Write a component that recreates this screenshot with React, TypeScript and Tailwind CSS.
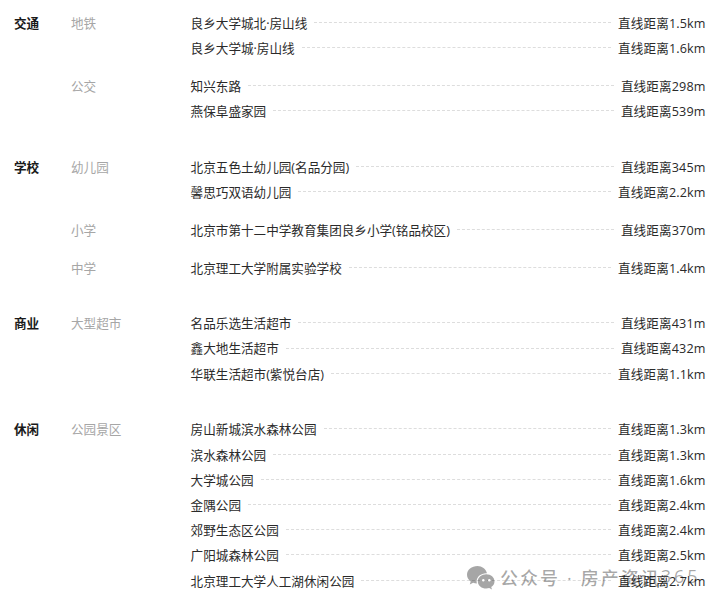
const groups = [
  {
    title: "交通",
    subs: [
      {
        name: "地铁",
        rows: [
          ["良乡大学城北·房山线", "直线距离1.5km"],
          ["良乡大学城·房山线", "直线距离1.6km"],
        ],
      },
      {
        name: "公交",
        rows: [
          ["知兴东路", "直线距离298m"],
          ["燕保阜盛家园", "直线距离539m"],
        ],
      },
    ],
  },
  {
    title: "学校",
    subs: [
      {
        name: "幼儿园",
        rows: [
          ["北京五色土幼儿园(名品分园)", "直线距离345m"],
          ["馨思巧双语幼儿园", "直线距离2.2km"],
        ],
      },
      { name: "小学", rows: [["北京市第十二中学教育集团良乡小学(铭品校区)", "直线距离370m"]] },
      { name: "中学", rows: [["北京理工大学附属实验学校", "直线距离1.4km"]] },
    ],
  },
  {
    title: "商业",
    subs: [
      {
        name: "大型超市",
        rows: [
          ["名品乐选生活超市", "直线距离431m"],
          ["鑫大地生活超市", "直线距离432m"],
          ["华联生活超市(紫悦台店)", "直线距离1.1km"],
        ],
      },
    ],
  },
  {
    title: "休闲",
    subs: [
      {
        name: "公园景区",
        rows: [
          ["房山新城滨水森林公园", "直线距离1.3km"],
          ["滨水森林公园", "直线距离1.3km"],
          ["大学城公园", "直线距离1.6km"],
          ["金隅公园", "直线距离2.4km"],
          ["郊野生态区公园", "直线距离2.4km"],
          ["广阳城森林公园", "直线距离2.5km"],
          ["北京理工大学人工湖休闲公园", "直线距离2.7km"],
        ],
      },
    ],
  },
];

export default function App() {
  return (
    <div className="relative h-[608px] w-[724px] overflow-hidden bg-white font-['Open_Sans','Noto_Sans_CJK_SC',sans-serif] text-[12.6px] leading-[25.2px] text-[#2a2a2a]">
      <div className="flex flex-col gap-[30.5px] pl-[14px] pr-[18.5px] pt-[10.85px]">
        {groups.map((group) => (
          <div key={group.title} className="flex">
            <div className="w-[57px] shrink-0 font-bold text-[#1a1a1a]">{group.title}</div>
            <div className="flex min-w-0 flex-1 flex-col gap-[12.6px]">
              {group.subs.map((sub) => (
                <div key={sub.name} className="flex">
                  <div className="w-[119.6px] shrink-0 text-[#a6a6a6]">{sub.name}</div>
                  <div className="min-w-0 flex-1">
                    {sub.rows.map(([place, dist]) => (
                      <div key={place} className="flex items-center">
                        <span>{place}</span>
                        <span className="mx-[7px] h-0 flex-1 -translate-y-px border-t border-dashed border-[#ddd]" />
                        <span className="tracking-[0.12px]">{dist}</span>
                      </div>
                    ))}
                  </div>
                </div>
              ))}
            </div>
          </div>
        ))}
      </div>

      {/* 水印 */}
      <div className="absolute left-[467px] top-[566px] flex items-center gap-[5px] text-[#000]/35">
        <svg width="28" height="24" viewBox="0 0 28 24" fill="currentColor">
          <path d="M10.5 0C4.7 0 0 3.9 0 8.8c0 2.7 1.4 5 3.7 6.600L2.800 18.400l3.300-1.700c1.200.4 2.500.6 3.800.7-.2-.7-.3-1.400-.3-2.100 0-4.500 4.300-8.100 9.700-8.100h.7C18.900 3 15 0 10.500 0z" />
          <path d="M19.300 8.300c-4.700 0-8.500 3.200-8.500 7.100s3.800 7.100 8.500 7.100c1 0 2-.2 2.900-.4l2.800 1.500-.8-2.500c2-1.300 3.300-3.400 3.300-5.700 0-3.900-3.500-7.100-8.200-7.100z" />
          <circle cx="16.300" cy="14.200" r="1.200" fill="#fff" />
          <circle cx="22.300" cy="14.200" r="1.200" fill="#fff" />
        </svg>
        <span className="text-[18px] font-medium leading-[24px] tracking-[2px]">
          公众号<span className="mx-[7px]">·</span>房产资讯<span className="inline-block -translate-y-[2px] tracking-[3px]">365</span>
        </span>
      </div>
    </div>
  );
}
